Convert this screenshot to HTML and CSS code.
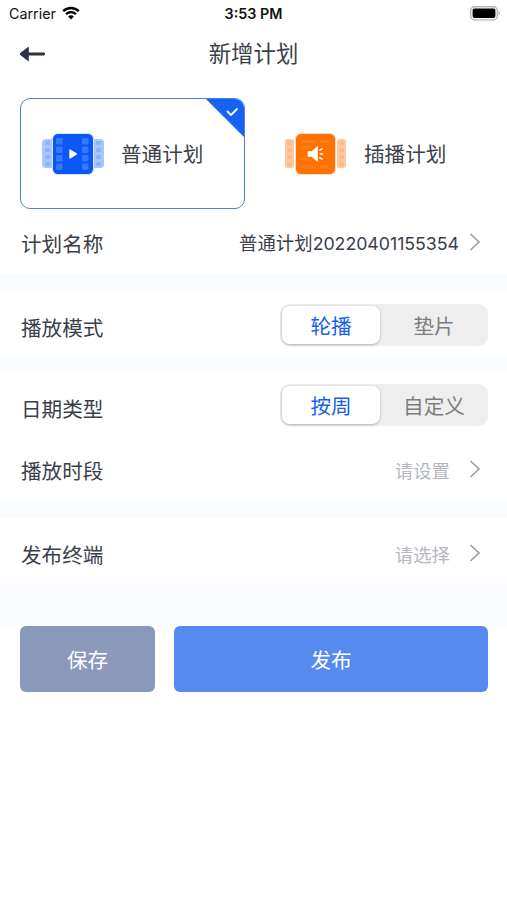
FILE: index.html
```html
<!DOCTYPE html>
<html lang="zh-CN">
<head>
  <meta charset="UTF-8" />
  <title>新增计划</title>
  <link rel="stylesheet" href="styles.css">
</head>
<body>

  <!-- Status bar -->
  <div class="status-bar">
    <div class="carrier">
      <span>Carrier</span>
      <svg width="18" height="14" viewBox="0 0 18 14">
        <path d="M1.2 5.1a11.2 11.2 0 0 1 15.6 0" fill="none" stroke="#000" stroke-width="2.5" />
        <path d="M4 8.2a7.2 7.2 0 0 1 10 0" fill="none" stroke="#000" stroke-width="2.3" />
        <path d="M9 13.6l-2.9-3a4.2 4.2 0 0 1 5.8 0z" />
      </svg>
    </div>
    <div class="time">3:53 PM</div>
    <svg class="battery" width="31" height="15" viewBox="0 0 31 15">
      <rect x=".7" y=".7" width="26.6" height="13.2" rx="4" fill="#fff" stroke="#b5b5b5" stroke-width="1.4" />
      <rect x="2.6" y="2.6" width="22.8" height="9.4" rx="2" />
      <path d="M28.6 5v4.6c2-.8 2-3.8 0-4.6z" fill="#b5b5b5" />
    </svg>
  </div>

  <!-- Header -->
  <header class="nav">
    <a class="back-btn" href="#" aria-label="返回">
      <svg width="27" height="18" viewBox="0 0 27 18">
        <path d="M1.2 8.1L9.8 1.4v15.2L1.2 9.9q-1-.9 0-1.8z" fill="#2d3142" />
        <path d="M8 9h16.7" stroke="#2d3142" stroke-width="2.8" stroke-linecap="round" />
      </svg>
    </a>
    <h1>新增计划</h1>
  </header>

  <!-- Plan type -->
  <div class="plan-types">
    <div class="plan active">
      <svg width="64" height="44" viewBox="0 0 64 44">
        <rect x="1" y="7" width="17" height="29" rx="3.5" fill="#a9c7ff" />
        <rect x="46" y="7" width="17" height="29" rx="3.5" fill="#a9c7ff" />
        <g fill="#8fb3fb">
          <rect x="4" y="9" width="5" height="4" rx="1" />
          <rect x="4" y="16" width="5" height="4" rx="1" />
          <rect x="4" y="23" width="5" height="4" rx="1" />
          <rect x="4" y="30" width="5" height="4" rx="1" />
          <rect x="55" y="9" width="5" height="4" rx="1" />
          <rect x="55" y="16" width="5" height="4" rx="1" />
          <rect x="55" y="23" width="5" height="4" rx="1" />
          <rect x="55" y="30" width="5" height="4" rx="1" />
        </g>
        <rect x="11.5" y="1.5" width="41" height="41" rx="5.5" fill="#0b57f4" stroke="#d5e3ff" />
        <g fill="#3579fa">
          <rect x="15" y="6" width="6.5" height="6.5" rx="1.2" />
          <rect x="15" y="14.5" width="6.5" height="6.5" rx="1.2" />
          <rect x="15" y="23" width="6.5" height="6.5" rx="1.2" />
          <rect x="15" y="31.5" width="6.5" height="6.5" rx="1.2" />
          <rect x="41" y="6" width="6.5" height="6.5" rx="1.2" />
          <rect x="41" y="14.5" width="6.5" height="6.5" rx="1.2" />
          <rect x="41" y="23" width="6.5" height="6.5" rx="1.2" />
          <rect x="41" y="31.5" width="6.5" height="6.5" rx="1.2" />
        </g>
        <path d="M29 18l6.5 4-6.5 4z" fill="#fff" stroke="#fff" stroke-width="1.4" stroke-linejoin="round" />
      </svg>
      <span>普通计划</span>
      <svg class="corner" width="38" height="38" viewBox="0 0 38 38">
        <path d="M0 0h38v38z" fill="#1663f2" />
        <path d="M21.5 12.5l3.5 3.5 6-6" fill="none" stroke="#fff" stroke-width="1.8" stroke-linecap="round" stroke-linejoin="round" />
      </svg>
    </div>
    <div class="plan">
      <svg width="64" height="44" viewBox="0 0 64 44">
        <rect x="1" y="7" width="9" height="29" rx="2.5" fill="#ffc9a0" />
        <rect x="53" y="7" width="9" height="29" rx="2.5" fill="#ffc9a0" />
        <g fill="#ffba8b">
          <rect x="3" y="9" width="5" height="4" rx="1" />
          <rect x="3" y="16" width="5" height="4" rx="1" />
          <rect x="3" y="23" width="5" height="4" rx="1" />
          <rect x="3" y="30" width="5" height="4" rx="1" />
          <rect x="55" y="9" width="5" height="4" rx="1" />
          <rect x="55" y="16" width="5" height="4" rx="1" />
          <rect x="55" y="23" width="5" height="4" rx="1" />
          <rect x="55" y="30" width="5" height="4" rx="1" />
        </g>
        <rect x="11.5" y="1.5" width="40" height="41" rx="5.5" fill="#ff7100" stroke="#ffe0c7" />
        <g fill="#ff7c12">
          <rect x="17" y="8" width="15" height="3" />
          <rect x="36" y="8" width="9" height="3" />
          <rect x="17" y="14" width="8" height="3" />
          <rect x="17" y="26" width="8" height="3" />
          <rect x="17" y="33" width="15" height="3" />
          <rect x="36" y="33" width="9" height="3" />
        </g>
        <path d="M24 19.5h3.5l6-5v15l-6-5H24z" fill="#fff" stroke="#fff" stroke-width=".6" stroke-linejoin="round" />
        <path d="M35.8 18.2l2.4-1.4M36.2 22h2.6M35.8 25.8l2.4 1.4" stroke="#fff" stroke-width="1.4" stroke-linecap="round" />
      </svg>
      <span>插播计划</span>
    </div>
  </div>

  <!-- Plan settings -->
  <div class="group">
    <div class="row name-row">
      <label>计划名称</label>
      <div class="value">普通计划<span class="digits">20220401155354</span></div>
      <svg class="arrow" width="12" height="20" viewBox="0 0 12 20"><path d="M1.5 2l8.5 8-8.5 8" /></svg>
    </div>
  </div>

  <div class="group">
    <div class="row mode-row">
      <label>播放模式</label>
      <div class="segment">
        <button class="selected">轮播</button>
        <button>垫片</button>
      </div>
    </div>
  </div>

  <div class="group">
    <div class="row date-row">
      <label>日期类型</label>
      <div class="segment">
        <button class="selected">按周</button>
        <button>自定义</button>
      </div>
    </div>
    <div class="row time-row">
      <label>播放时段</label>
      <div class="value placeholder">请设置</div>
      <svg class="arrow" width="12" height="20" viewBox="0 0 12 20"><path d="M1.5 2l8.5 8-8.5 8" /></svg>
    </div>
  </div>

  <div class="group">
    <div class="row terminal-row">
      <label>发布终端</label>
      <div class="value placeholder">请选择</div>
      <svg class="arrow" width="12" height="20" viewBox="0 0 12 20"><path d="M1.5 2l8.5 8-8.5 8" /></svg>
    </div>
  </div>

  <!-- Actions -->
  <div class="actions">
    <button class="save">保存</button>
    <button class="publish">发布</button>
  </div>

</body>
</html>
```
FILE: styles.css
```css
* {
  box-sizing: border-box;
}
body {
  margin: 0;
  min-height: 900px;
  font-family: "Liberation Sans", "Noto Sans CJK SC", sans-serif;
  font-size: 20.6px;
  color: #3b3f4c;
  background-color: #fff;
}
svg {
  display: block;
  flex: none;
}
button {
  padding: 0;
  border: none;
  font-family: inherit;
  font-size: 20.6px;
  cursor: pointer;
}

/* status bar */
.status-bar {
  display: grid;
  grid-template-columns: 1fr auto 1fr;
  align-items: center;
  height: 28px;
  padding: 0 6px 1px 9px;
  font-family: Inter, sans-serif;
  font-size: 14.3px;
  color: #111;
}
.carrier {
  display: flex;
  align-items: center;
  gap: 6px;
}
.carrier svg {
  margin-bottom: 1px;
}
.time {
  margin-right: 3px;
  font-weight: 600;
}
.battery {
  justify-self: end;
  margin-bottom: 1px;
}

/* header */
.nav {
  display: grid;
  grid-template-columns: 60px 1fr 60px;
  align-items: center;
  height: 50px;
}
.back-btn {
  padding: 2px 0 0 19px;
}
.nav h1 {
  margin: 0;
  padding-bottom: 2px;
  font-size: 22.4px;
  font-weight: 400;
  text-align: center;
}

/* plan type cards */
.plan-types {
  display: grid;
  grid-template-columns: 225px 225px;
  gap: 18px;
  padding: 20px 20px 0;
}
.plan {
  position: relative;
  display: flex;
  align-items: center;
  gap: 16px;
  height: 111px;
  padding: 0 0 0 20px;
  border: 1.5px solid transparent;
  border-radius: 10px;
  overflow: hidden;
}
.plan span {
  padding-bottom: 2px;
}
.plan.active {
  border-color: #4a80e8;
}
.corner {
  position: absolute;
  top: 0;
  right: 0;
}

/* rows */
.group + .group {
  border-top: 18px solid #f9fcfe;
}
.row {
  display: flex;
  align-items: center;
  padding: 0 19px 0 21px;
}
.row label {
  flex: 1;
  padding-top: 5px;
}
.name-row {
  height: 65px;
}
.name-row label {
  padding-top: 3px;
}
.mode-row {
  height: 63px;
  padding-top: 2px;
}
.date-row {
  height: 64px;
}
.time-row {
  height: 63px;
}
.time-row label {
  padding-top: 2px;
}
.terminal-row {
  height: 66px;
  padding-top: 3px;
}
.terminal-row label {
  padding-top: 2px;
}
.value {
  font-size: 18.4px;
}
.digits {
  font-family: Inter, sans-serif;
  font-size: 17.8px;
  letter-spacing: -0.05px;
}
.placeholder {
  margin-right: 9px;
  padding-top: 3px;
  color: #b5b8bf;
}
.arrow {
  margin: 0 7px 0 10px;
}
.arrow path {
  fill: none;
  stroke: #999ca3;
  stroke-width: 1.6;
}

/* segmented switch */
.segment {
  display: flex;
  width: 208px;
  height: 42px;
  padding: 2px;
  border-radius: 10px;
  background-color: #eee;
}
.segment button {
  flex: 1;
  padding-left: 2px;
  border-radius: 8px;
  color: #7d7d7d;
  background-color: transparent;
}
.segment .selected {
  flex: 0 0 98px;
  padding-left: 0;
  color: #1661e8;
  background-color: #fff;
  box-shadow: 0 1px 3px rgba(0, 0, 0, 0.25);
}

/* bottom buttons */
.actions {
  display: flex;
  gap: 19px;
  padding: 42px 19px 0 20px;
  background: linear-gradient(#fafcff 42px, #fff 42px);
}
.actions button {
  height: 66px;
  border-radius: 6px;
  color: #fff;
}
.save {
  width: 135px;
  background-color: #8a98bb;
}
.publish {
  flex: 1;
  background-color: #568aee;
}
```
